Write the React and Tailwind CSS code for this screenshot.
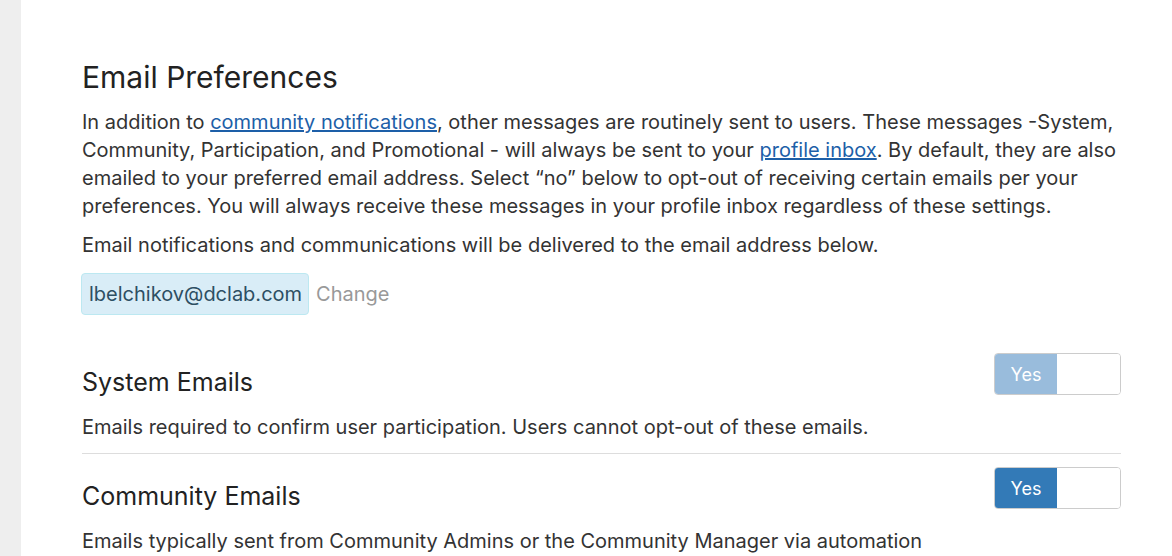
export default function App() {
  return (
    <div className="flex min-h-[556px] bg-white" style={{ fontFamily: "Inter, 'Noto Sans', sans-serif" }}>
      <div className="w-[21px] shrink-0 bg-[#eeeeee]" />
      <div className="flex-1 pl-[61px] pr-[51px] pt-[58px] text-[#333333]">
        <h1 className="text-[30px] leading-[38px] font-normal text-[#222]">Email Preferences</h1>
        <p className="mt-[12px] text-[20px] leading-[28px]">
          In addition to <a href="#" className="text-[#1d5fa8] underline">community notifications</a>, other messages are routinely sent to users. These messages -System, Community, Participation, and Promotional - will always be sent to your <a href="#" className="text-[#1d5fa8] underline">profile inbox</a>. By default, they are also emailed to your preferred email address. Select “no” below to opt-out of receiving certain emails per your preferences. You will always receive these messages in your profile inbox regardless of these settings.
        </p>
        <p className="mt-[11px] text-[20px] leading-[28px]">Email notifications and communications will be delivered to the email address below.</p>
        <div className="mt-[14px] -ml-px flex items-center gap-[7px]">
          <span className="inline-flex h-[42px] items-center rounded-[4px] border border-[#bce8f1] bg-[#d9edf7] pl-[7px] pr-[6px] text-[20px] text-[#2d4f63]">lbelchikov@dclab.com</span>
          <span className="text-[20px] text-[#999999]">Change</span>
        </div>

        <div className="mt-[38px] flex items-start justify-between">
          <h2 className="pt-[13px] text-[25px] leading-[32px] text-[#222]">System Emails</h2>
          <Toggle light />
        </div>
        <p className="mt-[15px] text-[20px] leading-[28px]">Emails required to confirm user participation. Users cannot opt-out of these emails.</p>
        <div className="mt-[12px] h-px bg-[#dddddd]" />

        <div className="mt-[13px] flex items-start justify-between">
          <h2 className="pt-[13px] text-[25px] leading-[32px] text-[#222]">Community Emails</h2>
          <Toggle />
        </div>
        <p className="mt-[15px] text-[20px] leading-[28px]">Emails typically sent from Community Admins or the Community Manager via automation</p>
      </div>
    </div>
  );
}

function Toggle({ light }) {
  return (
    <div className="flex h-[42px] w-[127px] overflow-hidden rounded-[4px] border border-[#cccccc] bg-white">
      <div className={`flex w-[62px] items-center justify-center text-[18px] text-white ${light ? "bg-[#99bcdc]" : "bg-[#337ab7]"}`}>Yes</div>
      <div className="flex-1 bg-white" />
    </div>
  );
}
